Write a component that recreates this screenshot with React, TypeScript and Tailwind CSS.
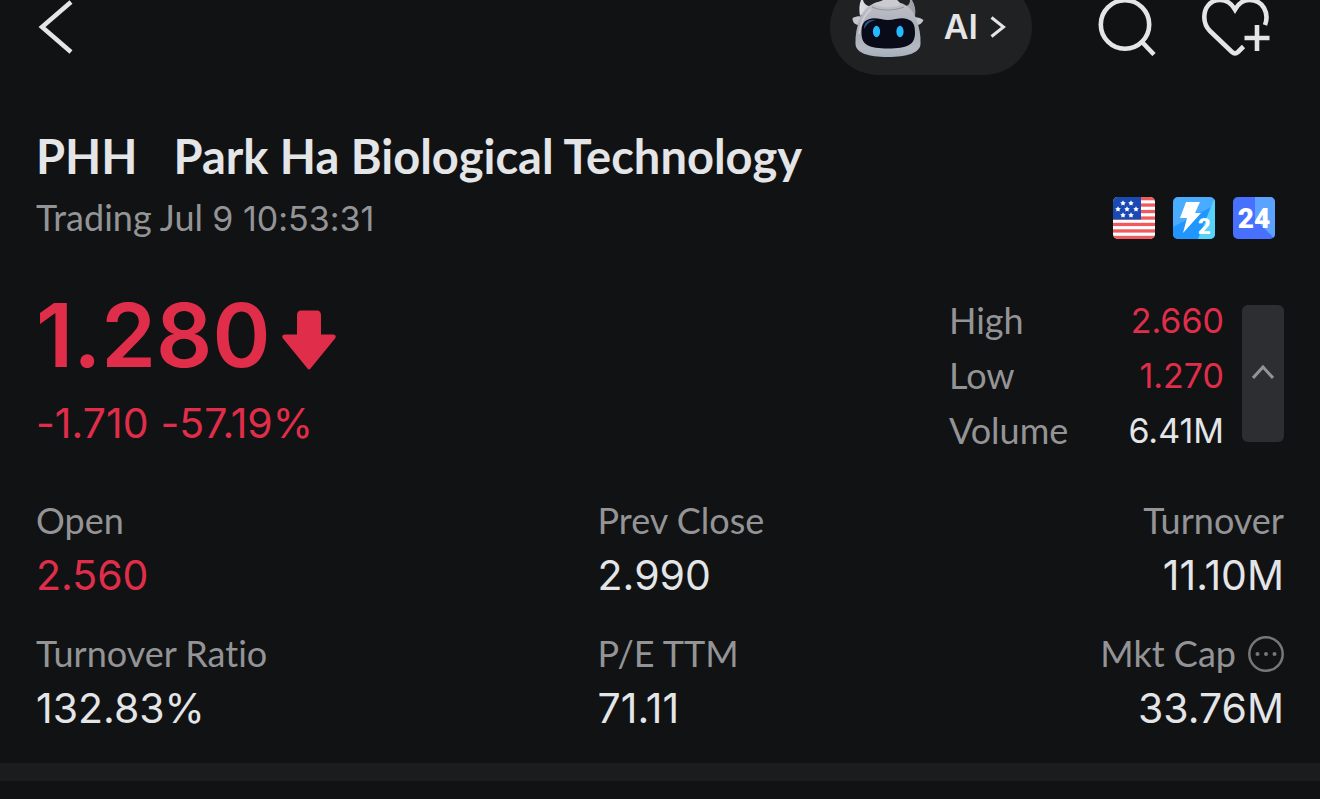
import type { ReactNode } from "react";

type Tone = "down" | "plain";

const toneClass: Record<Tone, string> = {
  down: "text-[#e02e4a]",
  plain: "text-[#e4e5e7]",
};

const range: { label: string; value: string; tone: Tone }[] = [
  { label: "High", value: "2.660", tone: "down" },
  { label: "Low", value: "1.270", tone: "down" },
  { label: "Volume", value: "6.41M", tone: "plain" },
];

function BackIcon() {
  return (
    <svg width="40" height="56" viewBox="0 0 40 56" fill="none" stroke="#e4e5e7" strokeWidth="4.5" aria-hidden="true">
      <path d="M35 2 6 27l29 25" />
    </svg>
  );
}

function SearchIcon() {
  return (
    <svg width="60" height="60" viewBox="0 0 60 60" fill="none" stroke="#e4e5e7" strokeWidth="4.6" aria-hidden="true">
      <circle cx="29" cy="28.5" r="24.2" />
      <path d="m46 46 12 12.500" />
    </svg>
  );
}

function HeartPlusIcon() {
  return (
    <svg width="70" height="60" viewBox="0 0 70 60" fill="none" stroke="#e4e5e7" strokeWidth="4.6" aria-hidden="true">
      <path d="M65 29C69.500 17 63 4 49.500 4 43 4 38.500 7.500 35 13.500 31.500 7.500 26.500 4 20 4 10 4 4.300 12 4.300 21c0 6 1.700 10 5.700 14l22 21c2 1.800 4 1.800 6 0l5.500-5.500" />
      <path d="M57 29v26M44.500 42h25" />
    </svg>
  );
}

function RobotIcon() {
  return (
    <svg width="76" height="60" viewBox="0 0 76 60" aria-hidden="true">
      <defs>
        <linearGradient id="shell" x1="0" y1="0" x2="0" y2="1">
          <stop offset="0" stopColor="#bfc1c8" />
          <stop offset="0.55" stopColor="#a9adb7" />
          <stop offset="0.85" stopColor="#b3b8c1" />
          <stop offset="1" stopColor="#a2b0bd" />
        </linearGradient>
        <linearGradient id="horn" x1="0" y1="0" x2="1" y2="0">
          <stop offset="0" stopColor="#dfe0e5" />
          <stop offset="1" stopColor="#9a9da7" />
        </linearGradient>
      </defs>
      <path d="M11 0c-2 5-2 10-1 16l12-9c-5-1-8-3-9-7zM62 0c3 5 4 10 3 16L53 7c5-1 7-3 7-7z" fill="url(#horn)" />
      <path d="M2.500 18c4-2 8-2 11-1l-6 8c-3-1-5-3-5-7zM73.500 20c-4-3-8-3-12-3l5 8c3 0 6-2 7-5z" fill="#c3c6cd" />
      <path d="M38 1C54 1 62 8 66 18c3 8 5 17 4.500 26C70 53 57 57 37.500 57S6 53 5.500 44C5 35 7 26 10 18 14 8 22 1 38 1z" fill="url(#shell)" />
      <path d="M22 7c8 4 22 4 32 0" fill="none" stroke="#9296a1" strokeWidth="1.200" />
      <path d="M23 4c3-2 7-2 10-4h14c2 1 3 3 3 5-9 3-18 3-27-1z" fill="#c9cbd1" />
      <path d="M9 34c1-9 4-18 12-25" fill="none" stroke="#d5d7dd" strokeWidth="2" opacity=".7" />
      <path d="M38 20c7 0 13-3 19-1 7 2 8 7 8 14 0 12-8 15.500-27 15.500S11.500 45 11.500 33c0-7 1-12 8-14 6-2 12 1 18.500 1z" fill="#090b18" />
      <path d="M14 29c0-7 5-10 12-9-6 1-9 4-12 9z" fill="#2b568a" />
      <ellipse cx="26.500" cy="31.500" rx="3.600" ry="5.800" fill="#25b9ff" />
      <ellipse cx="50" cy="31.500" rx="3.600" ry="5.800" fill="#25b9ff" />
    </svg>
  );
}

function FlagBadge() {
  const stars = [[10, 6], [18, 6], [5, 12], [14, 12], [23, 12], [10, 18], [18, 18]];
  return (
    <svg width="42" height="42" viewBox="0 0 42 42" role="img" aria-label="US market">
      <clipPath id="flag"><rect width="42" height="42" rx="5" /></clipPath>
      <g clipPath="url(#flag)">
        <rect width="42" height="42" fill="#fff" />
        {[0, 6.4, 12.9, 19.4, 25.8, 32.3, 38.8].map((y) => (
          <rect key={y} y={y} width="42" height="3.3" fill="#f05a5f" />
        ))}
        <rect width="28" height="22.500" fill="#1849b5" />
        {stars.map(([x, y]) => (
          <path
            key={`${x}-${y}`}
            transform={`translate(${x} ${y})`}
            d="M0-2.700.9-.9l1.900.3L1.400.7l.3 1.900L0 1.700l-1.700.9.3-1.900L-2.800-.6l1.900-.3z"
            fill="#fff"
          />
        ))}
      </g>
    </svg>
  );
}

function LevelTwoBadge() {
  return (
    <svg width="42" height="42" viewBox="0 0 42 42" role="img" aria-label="Level 2 quotes">
      <clipPath id="lv2"><rect width="42" height="42" rx="5" /></clipPath>
      <g clipPath="url(#lv2)">
        <rect width="42" height="42" fill="#4aacff" />
        <path d="M0 30 42 8v34H0z" fill="#2196ff" />
        <path d="M42 0v42H25z" fill="#55d3fb" />
        <path d="M13 5h14l-5 11h6L10 36l4-15H7z" fill="#fff" />
      </g>
      <text x="25" y="37" fill="#fff" className="font-[Roboto] text-[22px] font-black">2</text>
    </svg>
  );
}

function AllDayBadge() {
  return (
    <svg width="42" height="42" viewBox="0 0 42 42" role="img" aria-label="24 hour trading">
      <clipPath id="allday"><rect width="42" height="42" rx="5" /></clipPath>
      <g clipPath="url(#allday)">
        <rect width="42" height="42" fill="#4870ff" />
        <path d="M22 0h20v42L22 22z" fill="#5ba3ff" />
      </g>
      <text x="21" y="31" textAnchor="middle" fill="#fff" className="font-[Roboto] text-[28px] font-black">24</text>
    </svg>
  );
}

function DownArrow() {
  return (
    <svg width="54" height="60" viewBox="0 0 54 60" fill="#e02e4a" role="img" aria-label="Down">
      <path d="M19 .5h16c2.500 0 4 2 4 4.500v19.500h12c2.500 0 3.500 2 2 4L28.500 58.500c-1 1.300-2 1.300-3 0L1 28.500c-1.500-2-.5-4 2-4h12V5C15 2.500 16.500.5 19 .5z" />
    </svg>
  );
}

function MoreIcon() {
  return (
    <svg width="36" height="36" viewBox="0 0 36 36" fill="#777779" aria-hidden="true">
      <circle cx="18" cy="18" r="16.700" fill="none" stroke="#777779" strokeWidth="2.500" />
      <circle cx="9.500" cy="18" r="2" />
      <circle cx="18" cy="18" r="2" />
      <circle cx="26.500" cy="18" r="2" />
    </svg>
  );
}

function Stat({ label, value, tone = "plain", end = false }: { label: ReactNode; value: string; tone?: Tone; end?: boolean }) {
  return (
    <div className={end ? "flex flex-col items-end" : "flex flex-col"}>
      <dt className="flex items-center gap-3 text-[36px] leading-[55px] text-[#949496]">{label}</dt>
      <dd className={`font-[Inter,sans-serif] text-[41px] leading-[55px] ${toneClass[tone]}`}>{value}</dd>
    </div>
  );
}

export default function App() {
  return (
    <div className="min-h-screen bg-[#111214] font-[Lato,sans-serif] text-[#e4e5e7] [font-variant-ligatures:none]">
      <header className="flex h-[75px] items-end overflow-hidden pl-9 pr-[50px]">
        <button type="button" aria-label="Back" className="mb-[19px]">
          <BackIcon />
        </button>
        <button type="button" className="ml-auto flex h-24 shrink-0 items-end rounded-full bg-[#202123] pl-5 pr-[26px]">
          <span className="pb-[15px]"><RobotIcon /></span>
          <span className="ml-[18px] pb-[26px] font-[Inter,sans-serif] text-[34px] leading-11 font-semibold">AI</span>
          <svg width="16" height="22" viewBox="0 0 16 22" fill="none" stroke="#e4e5e7" strokeWidth="3" className="mb-[37px] ml-3" aria-hidden="true">
            <path d="m1.500 1.500 12 9.500-12 9.500" />
          </svg>
        </button>
        <button type="button" aria-label="Search" className="mb-[19px] ml-16">
          <SearchIcon />
        </button>
        <button type="button" aria-label="Add to watchlist" className="mb-[19px] ml-11">
          <HeartPlusIcon />
        </button>
      </header>

      <main>
        <section className="px-9 pt-[53px]">
          <h1 className="flex gap-9 text-[47px] leading-[56px] font-bold">
            <span>PHH</span>
            <span>Park Ha Biological Technology</span>
          </h1>
          <div className="mt-3 flex items-center justify-between pr-[9px]">
            <p className="text-[36px] leading-[42px] text-[#949496]">
              Trading Jul <time className="font-[Inter,sans-serif] text-[34px]">9 10:53:31</time>
            </p>
            <div className="flex gap-[18px]">
              <FlagBadge />
              <LevelTwoBadge />
              <AllDayBadge />
            </div>
          </div>
        </section>

        <section className="mt-[53px] flex items-start justify-between px-9">
          <div className="text-[#e02e4a]">
            <div className="flex items-end gap-3">
              <span className="font-[Inter,sans-serif] text-[88px] leading-[84px] font-semibold">1.280</span>
              <span className="pb-[7px]"><DownArrow /></span>
            </div>
            <p className="mt-[21px] flex gap-3 font-[Inter,sans-serif] text-[41px] leading-[50px]">
              <span>-1.710</span>
              <span>-57.19%</span>
            </p>
          </div>
          <div className="flex items-start gap-[18px]">
            <dl className="w-[275px]">
              {range.map((row) => (
                <div key={row.label} className="flex justify-between leading-[55px]">
                  <dt className="text-[36px] text-[#949496]">{row.label}</dt>
                  <dd className={`font-[Inter,sans-serif] text-[34px] ${toneClass[row.tone]}`}>{row.value}</dd>
                </div>
              ))}
            </dl>
            <button type="button" aria-label="Collapse quote details" className="mt-3 flex h-[137px] w-[42px] items-center justify-center rounded-md bg-[#2d2e32] pb-1">
              <svg width="22" height="14" viewBox="0 0 22 14" fill="none" stroke="#949496" strokeWidth="3" aria-hidden="true">
                <path d="m1 13 10-11 10 11" />
              </svg>
            </button>
          </div>
        </section>

        <dl className="mt-[35px] grid grid-cols-[45fr_30fr_25fr] gap-y-[23px] px-9 pb-[27px]">
          <Stat label="Open" value="2.560" tone="down" />
          <Stat label="Prev Close" value="2.990" />
          <Stat label="Turnover" value="11.10M" end />
          <Stat label="Turnover Ratio" value="132.83%" />
          <Stat label="P/E TTM" value="71.11" />
          <Stat
            label={
              <>
                Mkt Cap
                <button type="button" aria-label="More about market cap"><MoreIcon /></button>
              </>
            }
            value="33.76M"
            end
          />
        </dl>
      </main>
      <div className="h-[18px] bg-[#1b1c1e]" />
    </div>
  );
}
